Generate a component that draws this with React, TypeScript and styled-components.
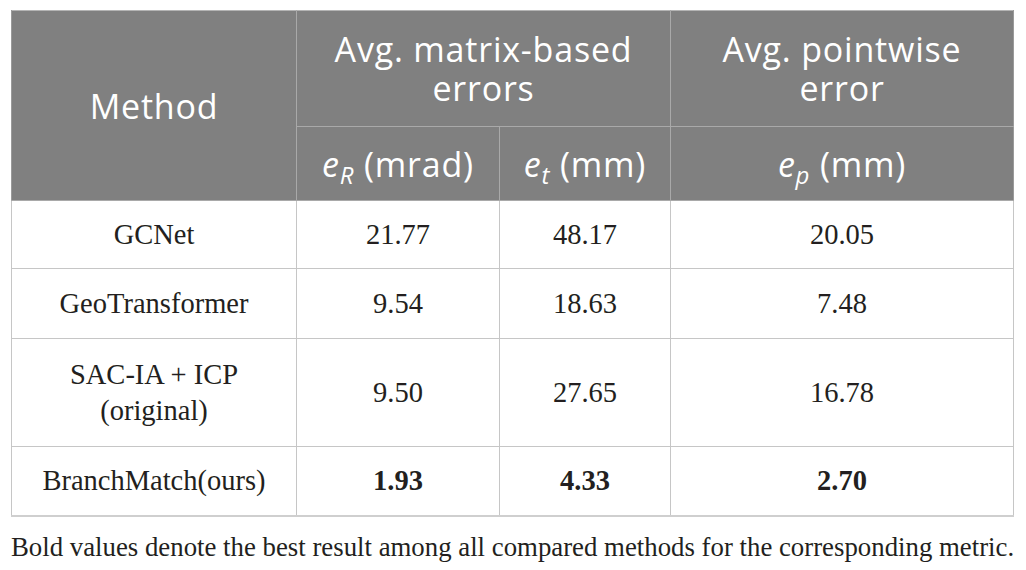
import styled, { createGlobalStyle } from 'styled-components';

const GlobalStyle = createGlobalStyle`
    html, body {
        margin: 0;
        padding: 0;
        background: #ffffff;
    }
`;

interface Row {
    method: string[];
    eR: string;
    et: string;
    ep: string;
    best?: boolean;
    height: number;
}

const rows: Row[] = [
    { method: ['GCNet'], eR: '21.77', et: '48.17', ep: '20.05', height: 68 },
    { method: ['GeoTransformer'], eR: '9.54', et: '18.63', ep: '7.48', height: 70 },
    { method: ['SAC-IA + ICP', '(original)'], eR: '9.50', et: '27.65', ep: '16.78', height: 108 },
    { method: ['BranchMatch(ours)'], eR: '1.93', et: '4.33', ep: '2.70', best: true, height: 69 },
];

const App = () => {
    return (
        <Page>
            <GlobalStyle />
            <Table>
                <colgroup>
                    <col style={{ width: 285 }} />
                    <col style={{ width: 203 }} />
                    <col style={{ width: 171 }} />
                    <col style={{ width: 343 }} />
                </colgroup>
                <thead>
                    <HeadRow height={116}>
                        <HeadCell rowSpan={2}>Method</HeadCell>
                        <HeadCell colSpan={2}>
                            <HeadLine>Avg. matrix-based</HeadLine>
                            <HeadLine>errors</HeadLine>
                        </HeadCell>
                        <HeadCell>
                            <HeadLine>Avg. pointwise</HeadLine>
                            <HeadLine>error</HeadLine>
                        </HeadCell>
                    </HeadRow>
                    <HeadRow height={74}>
                        <HeadCell>
                            <Var>e</Var>
                            <Sub>R</Sub> (mrad)
                        </HeadCell>
                        <HeadCell>
                            <Var>e</Var>
                            <Sub>t</Sub> (mm)
                        </HeadCell>
                        <HeadCell>
                            <Var>e</Var>
                            <Sub>p</Sub> (mm)
                        </HeadCell>
                    </HeadRow>
                </thead>
                <tbody>
                    {rows.map((row) => (
                        <BodyRow key={row.method[0]} height={row.height}>
                            <Cell>
                                {row.method.map((line, j) => (
                                    <div key={j}>{line}</div>
                                ))}
                            </Cell>
                            <Cell bold={row.best}>{row.eR}</Cell>
                            <Cell bold={row.best}>{row.et}</Cell>
                            <Cell bold={row.best}>{row.ep}</Cell>
                        </BodyRow>
                    ))}
                </tbody>
            </Table>
            <Caption>
                Bold values denote the best result among all compared methods for the corresponding metric.
            </Caption>
        </Page>
    );
};

const Page = styled.div`
    width: 1026px;
    height: 570px;
    padding: 10px 0 0 11px;
    box-sizing: border-box;
    background: #ffffff;
`;

const Table = styled.table`
    width: 1003px;
    border-collapse: collapse;
    table-layout: fixed;
    border-top: 1px solid #b4b4b4;
    border-bottom: 2px solid #cfcfcf;
`;

const HeadRow = styled.tr<{ height: number }>`
    height: ${({ height }) => height}px;
    background-color: #808080;
`;

const HeadCell = styled.th`
    padding: 0;
    border: 1px solid #a9a9a9;
    border-top: none;
    color: #ffffff;
    font-family: 'Open Sans', 'Lato', sans-serif;
    font-weight: 400;
    font-size: 34px;
    line-height: 40px;
    letter-spacing: 0.8px;
    text-align: center;
    vertical-align: middle;

    &:first-child {
        border-left: 1px solid #9a9a9a;
    }
    &:last-child {
        border-right: 1px solid #9a9a9a;
    }
`;

const HeadLine = styled.div`
    height: 39px;
    line-height: 39px;
`;

const Var = styled.i`
    font-style: italic;
`;

const Sub = styled.sub`
    font-style: italic;
    font-size: 24px;
    vertical-align: -7px;
    line-height: 0;
`;

const BodyRow = styled.tr<{ height: number }>`
    height: ${({ height }) => height}px;
`;

const Cell = styled.td<{ bold?: boolean }>`
    padding: 0;
    border: 1px solid #c6c6c6;
    color: #231f20;
    font-family: 'Liberation Serif', 'Times New Roman', serif;
    font-weight: ${({ bold }) => (bold ? 700 : 400)};
    font-size: 28.5px;
    line-height: 36px;
    text-align: center;
    vertical-align: middle;
`;

const Caption = styled.p`
    margin: 15px 0 0;
    color: #231f20;
    font-family: 'Liberation Serif', 'Times New Roman', serif;
    font-size: 26.8px;
    line-height: 30px;
    white-space: nowrap;
`;

export default App;
